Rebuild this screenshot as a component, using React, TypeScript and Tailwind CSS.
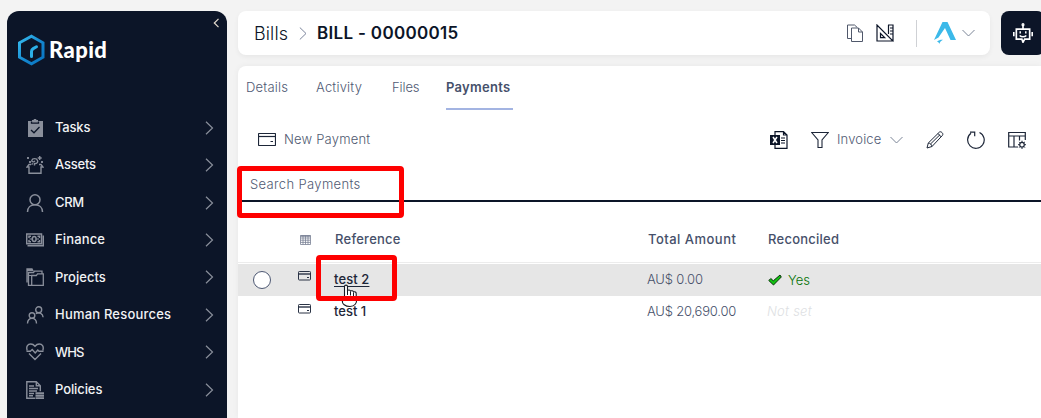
import React from "react";

type IconProps = { className?: string; children?: React.ReactNode; size?: number };

function Icon({ className = "", children, size = 18 }: IconProps) {
  return (
    <svg
      width={size}
      height={size}
      viewBox="0 0 18 18"
      fill="none"
      stroke="currentColor"
      strokeWidth={1.2}
      className={"shrink-0 " + className}
    >
      {children}
    </svg>
  );
}

const icons = {
  tasks: (
    <>
      <path d="M2 2h4V1h1.500L8 0h2l.5 1H12v1h5v16H2z" fill="currentColor" stroke="none" />
      <path d="M5.500 2.500v1.700h7V2.500M5 11l3 2.800L13.500 8" stroke="#0c1528" strokeWidth={1.300} />
    </>
  ),
  assets: (
    <>
      <path d="M5 8.500H3L1 11h2v6.300h12V11h2l-2-2.500h-2" strokeWidth={1.400} />
      <path d="M8.500 9.500V7.700c3-.2 3.600-1.700 3-3.300C10.600 2 6.500 2 5.800 4.400c0 1.700 2.500 2 3 .3M7 7.500l-1.500 1" strokeWidth={1.400} />
      <path d="M13.700 0v4M11.700 2h4M16 5v2M15 6h2M2 1v2M1 2h2M4 5v2M3 6h2" strokeWidth={1.400} />
    </>
  ),
  crm: (
    <>
      <circle cx="9" cy="5.800" r="5" strokeWidth={1.500} />
      <path d="M1.500 18c0-4.500 3-7.200 7.500-7.200s7.500 2.700 7.500 7.200" strokeWidth={1.500} />
    </>
  ),
  finance: (
    <>
      <path d="M.7 3h14.800v9.800H.7z" strokeWidth={1.500} />
      <path d="M17.300 4.500v10.200H1.500" strokeWidth={1.600} />
      <path d="M3 7V5.200h2M11.500 5.200h2V7M3 9v1.800h2M11.500 10.800h2V9" strokeWidth={1.500} />
      <ellipse cx="8.200" cy="8" rx="1.900" ry="2.500" strokeWidth={1.500} />
      <path d="M3.500 8H6M10.500 8H13" />
    </>
  ),
  projects: (
    <>
      <path d="M5.700 17.300V7.500h4.600l1.200-1.700h5.800v11.500H2.500V4.700h5l1-1.500H16v2.500M1 14.500V1h5l.8 1.500H1" strokeWidth={1.300} />
      <path d="M2.500 7.500h7M1 1.800h5" />
    </>
  ),
  people: (
    <>
      <circle cx="12.700" cy="3.800" r="3" strokeWidth={1.400} />
      <circle cx="6" cy="9.500" r="2.800" strokeWidth={1.400} />
      <path d="M1.500 17.500c0-3.200 1.800-5.200 4.500-5.200s4.500 2 4.500 5.200M9.800 7.600c3.700-1.800 7-.3 7.300 3.700" strokeWidth={1.400} />
    </>
  ),
  heart: (
    <>
      <path d="M1.200 7.500C-.2 3 2 1 4.700 1 6.800 1 8 2 9 3.200 10 2 11.200 1 13.300 1 16 1 18.200 3 16.800 7.500M3 10.500 9 16.500l6-6" strokeWidth={1.400} />
      <path d="M.5 8.200h3.800L6.200 6.500l3 3.500 2.600-3L13 8.200h4.500" strokeWidth={1.400} />
    </>
  ),
  policies: (
    <>
      <path d="M9 17.300H.8V.7h9.500l4 4v5.500M10.300.7v4h4" strokeWidth={1.400} />
      <path d="M3 5h5M3 7.500h9M3 10h8M3 12.500h5M3 14.700h4" strokeWidth={1.400} />
      <path d="M9.500 12.300H18M9.500 14.700H18M9.500 17.200H18" strokeWidth={1.900} />
    </>
  ),
};

const menu = [
  { label: "Tasks", icon: icons.tasks, spacing: "tracking-[-0.2px]" },
  { label: "Assets", icon: icons.assets, spacing: "tracking-[-0.2px]" },
  { label: "CRM", icon: icons.crm, spacing: "tracking-[-0.3px]" },
  { label: "Finance", icon: icons.finance, spacing: "tracking-[0.15px]" },
  { label: "Projects", icon: icons.projects, spacing: "tracking-[0px]" },
  { label: "Human Resources", icon: icons.people, spacing: "tracking-[0.2px]" },
  { label: "WHS", icon: icons.heart, spacing: "tracking-[-0.9px]" },
  { label: "Policies", icon: icons.policies, spacing: "tracking-[-0.1px]" },
];

function Sidebar() {
  return (
    <aside className="ml-[7px] mt-[11px] flex h-[425px] w-[220px] shrink-0 flex-col rounded-xl bg-[#0c1528]">
      <div className="flex h-[98px] justify-between pl-[10px] pr-[7px]">
        <div className="mt-[23px] flex h-8 items-center gap-[3px]">
          <svg width="29" height="32" viewBox="0 0 29 32" fill="none">
            <defs>
              <linearGradient id="mark" x1="0" y1="0" x2="1" y2="1">
                <stop offset="0" stopColor="#38bdf0" />
                <stop offset=".55" stopColor="#1487cf" />
                <stop offset="1" stopColor="#0873c0" />
              </linearGradient>
            </defs>
            <path d="M14.500 2.200 26 8.800v14.400l-11.500 6.600L2.500 23.200V8.800z" stroke="url(#mark)" strokeWidth="3" />
            <path d="M14.500 22.500v-5c0-1.500.5-2.200 1.700-2.900l3.300-1.900" stroke="#2cb0e8" strokeWidth="3" strokeLinecap="round" />
          </svg>
          <span className="font-['Lato'] text-[22px] font-black leading-8 tracking-[0.4px] text-white">Rapid</span>
        </div>
        <svg width="7" height="10" viewBox="0 0 7 10" fill="none" className="mt-[7px]">
          <path d="M5.500.8 1.300 5l4.200 4.200" stroke="#e6dccf" strokeWidth="1.200" />
        </svg>
      </div>
      <nav className="flex flex-col">
        {menu.map((m) => (
          <a key={m.label} className="flex h-[37.450px] items-center pl-[19px] pr-[13px] text-[#8a8f9b]">
            <Icon>{m.icon}</Icon>
            <span className={"ml-[11px] grow text-[13px] font-medium text-[#f1f2f4] " + m.spacing}>{m.label}</span>
            <svg width="9" height="14" viewBox="0 0 9 14" fill="none">
              <path d="M1 .7 7.500 7 1 13.300" stroke="currentColor" strokeWidth="1.200" />
            </svg>
          </a>
        ))}
      </nav>
    </aside>
  );
}

function ChevronDown() {
  return (
    <svg width="13" height="8" viewBox="0 0 13 8" fill="none">
      <path d="M.5 1 6.500 7l6-6" stroke="#7b8496" strokeWidth="1" />
    </svg>
  );
}

function Header() {
  return (
    <div className="flex h-11 gap-[11px]">
      <header className="flex w-[752px] shrink-0 items-center rounded-lg bg-white pl-4 pr-[15px] text-[#0c1528] shadow-[0_2px_5px_rgba(0,0,0,0.05)]">
        <span className="w-[35px] whitespace-nowrap text-[18px] font-light tracking-[0.1px]">Bills</span>
        <svg width="8" height="13" viewBox="0 0 8 13" fill="none" className="ml-[10px]">
          <path d="M.8.5 7 6.500l-6.200 6" stroke="#7a849b" />
        </svg>
        <span className="ml-[10px] mt-0.5 grow whitespace-nowrap text-[17px] font-semibold tracking-[0.32px]">BILL - 00000015</span>
        <Icon className="text-[#50586b]">
          <path d="M5.500 14.500h-4V1h7l2.800 2.500M5.500 4h7l4 4v9.500h-11zM12.500 4v4h4" strokeWidth={1} />
        </Icon>
        <Icon className="ml-3">
          <path d="M1 1v16h16zM4.500 9.500v4.200h4.200zM12 1h5v16M14 4h3M14 7h3M14 10h3M12.500 1v9" />
        </Icon>
        <div className="ml-[22px] h-[27px] w-px bg-[#cfd1d5]" />
        <svg width="22" height="22" viewBox="0 0 22 22" fill="#3cb9e9" className="ml-[17px]">
          <path d="M8.500 0h5L22 18h-5.500L11 6 4.500 15.500 0 18z" />
          <path d="M3 19.500c2-1.500 4-2 6-1.700-1.500 1-3.200 1.800-3.600 4.200-.4-1.400-1-2-2.400-2.500z" />
        </svg>
        <div className="ml-[6px]"><ChevronDown /></div>
      </header>
      <button className="flex w-11 shrink-0 items-center rounded-lg bg-[#0c1528] pl-3 text-white">
        <Icon size={20}>
          <path d="M9 5V1.500M3 5.500h12v9h-4.500L9 17.300l-1-2.800H3zM.7 8v4M17.300 8v4" strokeWidth={1.500} />
          <circle cx="9" cy="1.500" r=".8" />
          <path d="M6.500 7.500v2M11.500 7.500v2M6 11.200c1.500 1.600 4.500 1.600 6 0" strokeWidth={1.300} />
        </Icon>
      </button>
    </div>
  );
}

function Tabs() {
  return (
    <div className="flex h-11 pl-2 text-[13px] leading-[43px] text-[#505a74]">
      <span className="w-[70px] font-light tracking-[0.2px]">Details</span>
      <span className="w-[76px] font-light tracking-[0.2px]">Activity</span>
      <span className="w-[54px] font-light tracking-[-0.1px]">Files</span>
      <span className="w-[67px] whitespace-nowrap border-b-2 border-[#a3b4e2] font-semibold tracking-[0.3px] text-[#46506b]">
        Payments
      </span>
    </div>
  );
}

function Toolbar() {
  return (
    <div className="flex h-[59px] items-center pl-5 pr-[15px] text-[#1d2638]">
      <svg width="18" height="13" viewBox="0 0 18 13" fill="none" stroke="currentColor">
        <rect x=".5" y=".5" width="17" height="12" rx=".7" strokeWidth="1.200" />
        <path d="M.5 3.500h17" strokeWidth="1.200" />
        <path d="M12.500 8.500H15" />
      </svg>
      <span className="ml-2 grow text-[13px] font-light tracking-[0.2px] text-[#4f5970]">New Payment</span>
      <Icon className="text-[#0c1528]">
        <path d="M5 4V.7h8.500L17 4v13.300H5V14M13.500.7V4H17M11 7h4M11 9.500h4M11 12h4" />
        <path d="M0 4h10v10H0z" fill="currentColor" stroke="none" />
        <path d="m3 6 4 6M7 6l-4 6" stroke="white" strokeWidth={1.500} />
      </Icon>
      <Icon className="ml-[23px]">
        <path d="M.7 1.500h16.600L11 9v7.500H7V9z" strokeWidth={1.100} />
      </Icon>
      <span className="ml-2 w-[45px] whitespace-nowrap text-[13px] font-light tracking-[0.15px] text-[#505a74]">Invoice</span>
      <div className="ml-2"><ChevronDown /></div>
      <Icon className="ml-[23px]">
        <path d="M1 17l1.300-5L13.500 1c1.500-1 4.300 1.500 3 3.300L6 15.500zM2.300 12c2 .2 3.400 1.500 3.700 3.500M12 2.500 15.300 6M4.500 13 14 3.700" strokeWidth={1} />
      </Icon>
      <Icon className="ml-[23px]">
        <path d="M12.500 1.500A8.300 8.300 0 1 1 4 2.300M3 1.200h4.700v4" />
      </Icon>
      <Icon className="ml-[23px]">
        <path d="M10 16H.7V1.500h16.600V9M.7 5h16.600M6 5v11M11.500 5v4.500" />
        <circle cx="14" cy="13.700" r="2.300" />
        <path d="M14 9.700v1.600M14 16v2M10 13.700h1.600M16.400 13.700H18M11.200 10.900l1.100 1.100M15.700 15.400l1.200 1.200M16.900 10.900 15.700 12M12.300 15.400l-1.100 1.200" strokeWidth={1} />
      </Icon>
    </div>
  );
}

function CardIcon() {
  return (
    <svg width="13" height="10" viewBox="0 0 13 10" fill="none" stroke="#2a3345">
      <rect x=".5" y=".5" width="12" height="8.500" rx=".8" />
      <path d="M.5 3h12" strokeWidth="1.400" />
      <path d="M9 6.500h2" />
    </svg>
  );
}

function PaymentsTable() {
  return (
    <div className="grow text-[13px] text-[#46506a]">
      <div className="flex h-[61px] items-center border-b border-[#ececec] pt-[16px] font-medium">
        <svg width="11" height="10" viewBox="0 0 11 10" fill="none" stroke="#7a8295" strokeWidth=".8" className="ml-[62px]">
          <path d="M.5.500h10v9H.5zM.5 3h10M.5 5.200h10M.5 7.400h10M3 .5v9M5.500.5v9M8 .5v9" />
          <path d="M.5 1h10" strokeWidth="1.400" />
        </svg>
        <span className="ml-6 w-[313px] tracking-[0.25px]">Reference</span>
        <span className="w-[120px] tracking-[0.48px]">Total Amount</span>
        <span className="tracking-[0.25px]">Reconciled</span>
      </div>
      <div className="mt-px flex h-8 items-center bg-[#e6e6e6]">
        <div className="ml-[15px] h-[18px] w-[18px] rounded-full border border-[#4d5873] bg-white" />
        <div className="mb-2 ml-[27px]"><CardIcon /></div>
        <div className="relative ml-[23px] w-[313px]">
          <span className="font-medium tracking-[0.1px] text-[#1d2638] underline underline-offset-2">test 2</span>
          <svg width="18" height="24" viewBox="0 0 18 24" className="absolute left-[7px] top-[14px]">
            <path
              d="M3.500 14V2.500c0-1.800 3-1.800 3 0v4c.7-.7 2.500-.6 3 .5.900-.6 2.600-.3 3 .9 1.500-.5 2.700.2 2.700 1.800V15c1.300 4-1.700 7.500-6.200 7.500S.5 20 1.500 16z"
              fill="white"
              stroke="#171a22"
              strokeWidth="1.100"
            />
            <path d="M6.500 6.500v4.500M9.500 7.500v4M12.500 8.500v3.500" stroke="#171a22" />
          </svg>
          <div className="absolute -left-[18px] -top-[15px] z-10 h-[46px] w-[81px] rounded-[4px] border-[5px] border-[#fe0000]" />
        </div>
        <span className="w-[121px] font-light tracking-[-0.15px]">AU$ 0.00</span>
        <svg width="14" height="12" viewBox="0 0 14 12">
          <path d="m.8 6.500 2-2 2.500 2.300L12 1l1.300 2-7.800 8z" fill="#12c312" stroke="#0a300a" />
        </svg>
        <span className="ml-[6px] mt-0.5 font-light text-[#087408]">Yes</span>
      </div>
      <div className="flex h-8 items-center">
        <div className="mb-[7px] ml-[60px]"><CardIcon /></div>
        <span className="relative z-[5] ml-[23px] w-[313px] font-medium text-[#1d2638]">test 1</span>
        <span className="w-[120px] font-light tracking-[-0.2px]">AU$ 20,690.00</span>
        <span className="font-light italic tracking-[0.25px] text-[#dedfe3]">Not set</span>
      </div>
    </div>
  );
}

export default function App() {
  return (
    <div className="flex h-[418px] w-[1041px] overflow-hidden bg-[#f3f3f3] font-['Inter',sans-serif]">
      <Sidebar />
      <div className="ml-[11px] mt-[11px] flex w-[803px] shrink-0 flex-col">
        <Header />
        <main className="mt-[11px] flex grow flex-col rounded-tl-lg bg-white shadow-[0_0_6px_rgba(0,0,0,0.05)]">
          <Tabs />
          <Toolbar />
          <div className="relative flex h-[33px] items-center border-b-2 border-[#0c1528] pl-3 text-[13px] font-light text-[#505a74]">
            <span className="tracking-[0.35px]">Search Payments</span>
            <div className="absolute -left-px -top-[3px] h-[52px] w-[167px] rounded-[4px] border-[5px] border-[#fe0000]" />
          </div>
          <PaymentsTable />
        </main>
      </div>
    </div>
  );
}
